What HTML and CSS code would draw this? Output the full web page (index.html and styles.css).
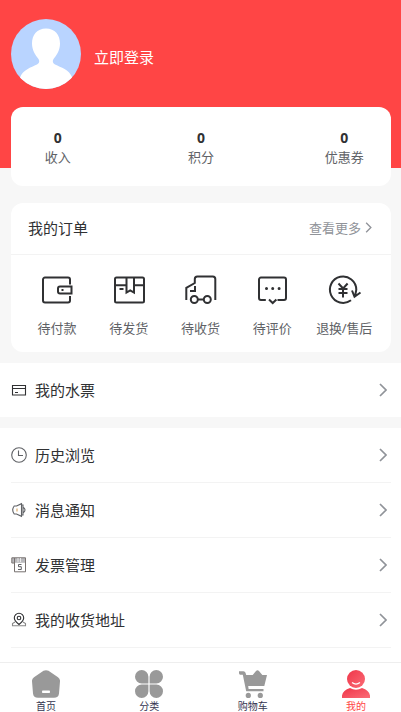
FILE: index.html
```html
<!DOCTYPE html>
<html lang="zh-CN">
<head>
<meta charset="utf-8">
<meta name="viewport" content="width=device-width, initial-scale=1">
<title>我的</title>
<link rel="stylesheet" href="styles.css">
</head>
<body>
<svg class="defs" width="0" height="0">
  <symbol id="arrow" viewBox="0 0 8 14"><path d="M1 1l6 6-6 6" fill="none" stroke="currentColor" stroke-width="1.700"/></symbol>
</svg>
<div class="app">
  <main class="content">
    <header class="hero">
      <svg class="avatar" viewBox="0 0 70 70">
        <rect width="70" height="70" fill="#b9d4ff"/>
        <path d="M35 9.500C26 9.500 21 16 21 24.500c0 7 3.500 11.500 6.500 15.500 1.500 2.500.5 4.500-1.500 5.500-6 3-14 5-17 13V70h52V58c-3-7.500-11-9.500-17-12.500-2-1-3-3-1.500-5.500 3-4 6.500-8.500 6.500-15.500C49 16 44 9.500 35 9.500z" fill="#fff"/>
      </svg>
      <a class="login">立即登录</a>
    </header>
    <section class="card stats">
      <div class="stat"><b>0</b><span>收入</span></div>
      <div class="stat"><b>0</b><span>积分</span></div>
      <div class="stat"><b>0</b><span>优惠券</span></div>
    </section>
    <section class="card orders">
      <div class="orders-head">
        <h2>我的订单</h2>
        <a class="more">查看更多<svg class="more-arrow"><use href="#arrow"/></svg></a>
      </div>
      <div class="order-types">
        <div class="order-type">
          <svg viewBox="0 0 32 32"><path d="M29 10.500V5.500a2 2 0 0 0-2-2H4a2 2 0 0 0-2 2v21a2 2 0 0 0 2 2h23a2 2 0 0 0 2-2V22M19 12.500h11.500v7H19a2 2 0 0 1-2-2v-3a2 2 0 0 1 2-2z"/><path d="M20.500 16h2"/></svg>
          <span>待付款</span>
        </div>
        <div class="order-type">
          <svg viewBox="0 0 32 32"><rect x="2" y="3.500" width="29" height="25" rx="1.500"/><path d="M2 11.200h11M21.500 11.200H31M13.500 4v14.500l3.700-2.200 3.800 2.200V4M6.500 15h4"/></svg>
          <span>待发货</span>
        </div>
        <div class="order-type">
          <svg viewBox="0 0 32 32"><path d="M2.300 26V13.800L10.800 9V5a2.500 2.500 0 0 1 2.500-2.500h15.500A2.500 2.500 0 0 1 31.300 5v21M6 17h5v-5M14 25.500h5.500"/><circle cx="10.300" cy="25.500" r="3.500"/><circle cx="23.300" cy="25.500" r="3.500"/></svg>
          <span>待收货</span>
        </div>
        <div class="order-type">
          <svg viewBox="0 0 32 32"><path d="M9.800 26H5a2 2 0 0 1-2-2V5.500a2 2 0 0 1 2-2h23a2 2 0 0 1 2 2V24a2 2 0 0 1-2 2h-6.500M13 25.500l3.700 3.500 3.700-3.500"/><path class="dots" d="M10.500 14.500h.01M16.700 14.500h.01M23.100 14.500h.01"/></svg>
          <span>待评价</span>
        </div>
        <div class="order-type">
          <svg viewBox="0 0 32 32"><path d="M23 26.300A13.200 13.200 0 1 1 28.300 15.700L27 22.500M24 16.500l2.500 6.300 6-4.300M10.500 9.500l4.600 5 4.500-5M10.500 15h9M10.500 19h9M15 14.500v9"/></svg>
          <span class="narrow">退换/售后</span>
        </div>
      </div>
    </section>
    <nav class="menu">
      <a class="row">
        <svg class="row-icon" viewBox="0 0 16 16"><path d="M1.500 3.500h13v9.500h-13zM1.500 6.500h13M4 10.500h3"/></svg>
        <span>我的水票</span><svg class="row-arrow"><use href="#arrow"/></svg>
      </a>
    </nav>
    <nav class="menu">
      <a class="row">
        <svg class="row-icon grey" viewBox="0 0 16 16"><circle cx="8" cy="8" r="7.300"/><path d="M7.500 3.500v5H12"/></svg>
        <span>历史浏览</span><svg class="row-arrow"><use href="#arrow"/></svg>
      </a>
      <a class="row">
        <svg class="row-icon grey" viewBox="0 0 16 16"><path d="M5.500 4L10.500 1.700v12.600L5.500 12H3.200Q.2 8 3.200 4zM10.500 3h1.500v10h-1.500M12.500 5.500q3 2.500 0 5"/><path class="gold" d="M6 6.500v3"/></svg>
        <span>消息通知</span><svg class="row-arrow"><use href="#arrow"/></svg>
      </a>
      <a class="row">
        <svg class="row-icon invoice" viewBox="0 0 16 16"><path class="band" d="M1 .8h13.500v5H1z"/><path d="M3.500 6H.8V.8h13.700v14H3.500V1"/><path class="gap" d="M7 1v4M9.500 1v4"/><path class="mark" d="M10.500 7.500h-3v2.200h2.800v2.800H7"/></svg>
        <span>发票管理</span><svg class="row-arrow"><use href="#arrow"/></svg>
      </a>
      <a class="row">
        <svg class="row-icon" viewBox="0 0 16 16"><path d="M8 12.500C5.500 10.500 3.300 8.500 3.300 6a4.700 4.700 0 0 1 9.400 0c0 2.500-2.200 4.500-4.700 6.500z"/><circle cx="8" cy="6" r="1.800"/><path class="base" d="M4 10l-2.500 1.500v2.300h13v-2.300L12 10"/></svg>
        <span>我的收货地址</span><svg class="row-arrow"><use href="#arrow"/></svg>
      </a>
      <a class="row"></a>
    </nav>
  </main>
  <footer class="tabbar">
    <a class="tab">
      <svg viewBox="0 0 28 28"><path d="M11.500.8q2.500-1.300 5 0l9.500 6.400q2.200 1.600 2 4l-1 12.300q-.5 4.300-5 4.300H6q-4.500 0-5-4.300L0 11.200q-.2-2.400 2-4z"/><rect x="10" y="20.500" width="8" height="2.600" rx=".8" fill="#fff"/></svg>
      <span>首页</span>
    </a>
    <a class="tab">
      <svg viewBox="0 0 28 28"><path d="M6.700 0a6.700 6.700 0 0 1 6.700 6.700v6.700H6.700A6.700 6.700 0 0 1 6.700 0zM21.300 0a6.700 6.700 0 0 1 0 13.400h-6.700V6.700A6.700 6.700 0 0 1 21.300 0zM6.700 14.600h6.700v6.700a6.700 6.700 0 1 1-6.700-6.700zM14.600 14.600h6.700a6.700 6.700 0 1 1-6.700 6.700z"/></svg>
      <span>分类</span>
    </a>
    <a class="tab">
      <svg viewBox="0 0 28 28"><path d="M0 1.200h4.500q1.500 0 2 1.500L7.200 5H28l-2.700 11H9.200l.4 3H24.500V21.300H7.200L3.800 4.800H1.200Q0 4.500 0 3zM13.500 5.200L17 1q1.500-1.500 3 0l3.500 4.200z"/><circle cx="9.300" cy="25.400" r="2.600"/><circle cx="21.300" cy="25.400" r="2.600"/></svg>
      <span>购物车</span>
    </a>
    <a class="tab active">
      <svg viewBox="0 0 28 28">
        <defs><linearGradient id="rose" x1="0" y1="0" x2="1" y2="1"><stop offset="0" stop-color="#ef3549"/><stop offset="1" stop-color="#fb6c76"/></linearGradient></defs>
        <path d="M0 28v-2.500q1-5.500 8-7.500 6 3.500 12 0 7 2 8 7.500V28z" fill="url(#rose)"/><circle cx="14" cy="9" r="9" fill="url(#rose)"/><path d="M10 12.500q4 3.300 8 0" fill="none" stroke="#fff" stroke-width="1.200"/>
      </svg>
      <span>我的</span>
    </a>
  </footer>
</div>
</body>
</html>
```
FILE: styles.css
```css
* { box-sizing: border-box; }

body {
  margin: 0;
  background: #f7f7f7;
  color: #303133;
  font-family: "Noto Sans", "Noto Sans CJK SC", sans-serif;
  font-weight: 400;
}

svg { display: block; flex: none; }
.defs { display: none; }

.app {
  display: flex;
  flex-direction: column;
  height: 100vh;
  overflow: hidden;
}

.content { flex: 1; min-height: 0; overflow: hidden; }

.hero {
  display: flex;
  height: 168px;
  padding: 19px 11px 0;
  gap: 13px;
  background: #ff4545;
}
.avatar { width: 70px; height: 70px; border-radius: 50%; }
.login { margin-top: 27px; color: #fff; font-size: 15px; line-height: 22px; }

.card { margin: 0 10px 0 11px; border-radius: 12px; background: #fff; }

.stats {
  display: flex;
  justify-content: space-between;
  height: 79px;
  margin-top: -61px;
  padding: 21px 11px 0;
}
.stat {
  display: flex;
  flex-direction: column;
  align-items: center;
  width: 71.6px;
  line-height: 19px;
}
.stat b { font-size: 14px; line-height: 20px; }
.stat span { color: #606266; font-size: 13px; }

.orders { height: 149px; margin-top: 17px; margin-bottom: 11px; }
.orders-head {
  display: flex;
  align-items: center;
  justify-content: space-between;
  height: 52px;
  padding: 0 19px 2px 17px;
  border-bottom: 1px solid #f3f3f3;
}
.orders-head h2 { margin: 0; font-size: 15px; font-weight: 400; }
.more { display: flex; align-items: center; gap: 4px; color: #909399; font-size: 13px; }
.more-arrow { width: 7px; height: 11px; }

.order-types { display: grid; grid-template-columns: repeat(5, 1fr); padding: 19px 11px 0 10px; }
.order-type { display: flex; flex-direction: column; align-items: center; gap: 12px; }
.order-type svg {
  width: 32px;
  height: 32px;
  overflow: visible;
  fill: none;
  stroke: #303133;
  stroke-width: 2;
}
.order-type .dots { stroke-width: 3; stroke-linecap: round; }
.order-type span { color: #606266; font-size: 13px; line-height: 20px; white-space: nowrap; }
.order-type .narrow { letter-spacing: -0.2px; }

.menu { margin-bottom: 11px; padding: 0 10px 0 11px; background: #fff; }
.row {
  display: flex;
  align-items: center;
  height: 55px;
  padding-right: 4px;
  border-bottom: 1px solid #f3f3f3;
  font-size: 15px;
}
.row:only-child { height: 54px; border: 0; }
.row span { flex: 1; margin-left: 8px; padding-bottom: 2px; }
.row-icon { width: 16px; height: 16px; fill: none; stroke: #303133; stroke-width: 1.1; }
.row-icon.grey { stroke: #606266; }
.row-icon .gold { stroke: #d8a35c; }
.row-icon .base { stroke: #888; }
.invoice { stroke: #77716f; stroke-width: 1; }
.invoice .band { fill: #b9b9bc; stroke: none; }
.invoice .gap { stroke: #e9e9e9; }
.invoice .mark { stroke: #606266; }
.row-arrow { width: 8px; height: 14px; color: #909399; }

.tabbar {
  display: flex;
  justify-content: space-between;
  height: 50px;
  padding: 7px 15px 0 16px;
  border-top: 1px solid #eee;
  background: #fff;
}
.tab { display: flex; flex-direction: column; align-items: center; width: 60px; }
.tab svg { width: 28px; height: 28px; fill: #999; }
.tab span { color: #35354f; font-size: 10px; line-height: 16px; }
.tab.active span { color: #ff4545; }
```
